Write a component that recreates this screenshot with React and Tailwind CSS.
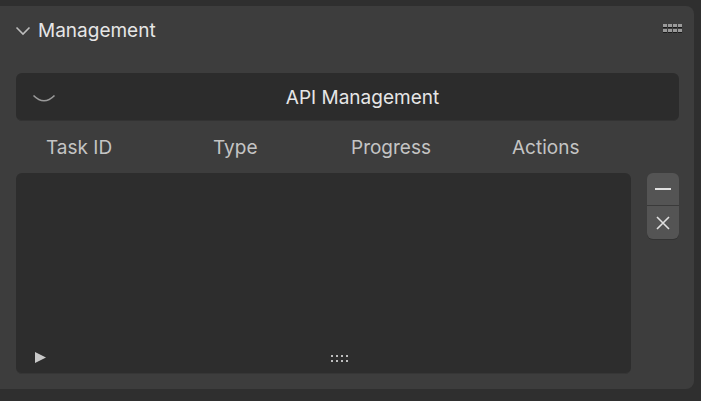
import React from 'react';

const cols = [
  { label: 'Task ID', cls: 'w-[197px] pl-[30px]' },
  { label: 'Type', cls: 'w-[138px]' },
  { label: 'Progress', cls: 'w-[161px]' },
  { label: 'Actions', cls: 'flex-1' },
];

const GripDots = ({ className }) => (
  <svg className={className} width="19" height="9" viewBox="0 0 19 9">
    {[0, 5, 10, 15].map(x => (
      <g key={x}>
        <rect x={x} y="0" width="4" height="3" fill="#9a9a9a" />
        <rect x={x} y="3" width="4" height="1" fill="#1a1a1a" />
        <rect x={x} y="5" width="4" height="3" fill="#9a9a9a" />
        <rect x={x} y="8" width="4" height="1" fill="#1a1a1a" />
      </g>
    ))}
  </svg>
);

const App = () => {
  return (
    <div className="w-[701px] h-[401px] bg-[#2f2f2f] pt-[6px] overflow-hidden" style={{ fontFamily: 'Inter, "Noto Sans", sans-serif' }}>
      <div className="w-[694px] h-[383px] bg-[#3d3d3d] rounded-r-[8px] flex flex-col">
        {/* panel header */}
        <div className="h-[49px] flex items-center pl-[15px] pr-[12px]">
          <svg width="16" height="10" viewBox="0 0 16 10" className="mr-[7px] mt-[1px]">
            <path d="M1.5 1.5 L8 8 L14.5 1.5" fill="none" stroke="#bdbdbd" strokeWidth="1.6" />
          </svg>
          <span className="text-[19px] text-[#e6e6e6] leading-none">Management</span>
          <div className="flex-1" />
          <GripDots className="mt-[-4px]" />
        </div>

        <div className="pl-[16px] pr-[15px] pt-[18px]">
          {/* sub panel header */}
          <div className="h-[48px] bg-[#2c2c2c] rounded-[6px] relative flex items-center justify-center pl-[30px] pt-[3px] border-b border-[#333]">
            <svg width="24" height="10" viewBox="0 0 24 10" className="absolute left-[16px] top-[21px]">
              <path d="M1.5 1.5 Q12 12 22.5 1.5" fill="none" stroke="#9a9a9a" strokeWidth="1.6" />
            </svg>
            <span className="text-[19px] text-[#e6e6e6]">API Management</span>
          </div>

          {/* column headers */}
          <div className="h-[52px] flex items-center pt-[2px] text-[19px] text-[#c4c4c4]">
            {cols.map(c => (
              <div key={c.label} className={c.cls}>{c.label}</div>
            ))}
          </div>

          {/* list + side buttons */}
          <div className="flex gap-[16px]">
            <div className="w-[615px] shrink-0 h-[201px] bg-[#2d2d2d] rounded-[6px] border-b border-[#363636] relative">
              <svg width="12" height="11" viewBox="0 0 12 11" className="absolute left-[19px] top-[179px]">
                <path d="M0 0 L11 5.5 L0 11 Z" fill="#c8c8c8" />
              </svg>
              <div className="absolute left-[315px] top-[182px] grid grid-cols-4 gap-x-[3px] gap-y-[3px]">
                {Array.from({ length: 8 }, (_, i) => (
                  <div key={i} className="w-[2px] h-[2px] bg-[#bdbdbd]" />
                ))}
              </div>
            </div>
            <div className="w-[32px] shrink-0 flex flex-col">
              <button className="h-[33px] bg-[#545454] rounded-t-[6px] flex items-center justify-center border-b border-[#3a3a3a]">
                <div className="w-[16px] h-[2px] bg-[#e0e0e0]" />
              </button>
              <button className="h-[33px] bg-[#545454] rounded-b-[6px] flex items-center justify-center shadow-[0_1px_0_#333]">
                <svg width="16" height="16" viewBox="0 0 16 16">
                  <path d="M2 2 L14 14 M14 2 L2 14" stroke="#e0e0e0" strokeWidth="1.6" />
                </svg>
              </button>
            </div>
          </div>
        </div>
      </div>
    </div>
  );
};

export default App;
